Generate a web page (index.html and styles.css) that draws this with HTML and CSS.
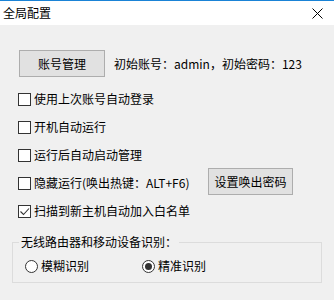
FILE: index.html
```html
<!DOCTYPE html>
<html lang="zh-CN">
<head>
  <meta charset="UTF-8" />
  <title>全局配置</title>
  <link rel="stylesheet" href="styles.css">
</head>
<body>

<div class="window">
  <!-- Title bar -->
  <div class="titlebar">
    <span class="title">全局配置</span>
    <svg class="close" width="11" height="11" viewBox="0 0 11 11">
      <path d="M0.5 0.5 L10.5 10.5 M10.5 0.5 L0.5 10.5" stroke="#000" stroke-width="1" fill="none"/>
    </svg>
  </div>

  <div class="content">
    <!-- Account -->
    <div class="account-row">
      <button class="btn btn-account">账号管理</button>
      <span class="hint">初始账号：admin，初始密码：123</span>
    </div>

    <!-- Options -->
    <ul class="options">
      <li class="option"><span class="check"></span><span>使用上次账号自动登录</span></li>
      <li class="option"><span class="check"></span><span>开机自动运行</span></li>
      <li class="option"><span class="check"></span><span>运行后自动启动管理</span></li>
      <li class="option">
        <span class="check"></span><span class="option-label">隐藏运行(唤出热键：ALT+F6)</span>
        <button class="btn btn-hotkey">设置唤出密码</button>
      </li>
      <li class="option">
        <span class="check">
          <svg width="11" height="11" viewBox="0 0 11 11">
            <path d="M1.5 5.5 L4.5 8.5 L10 2.5" stroke="#333" stroke-width="1.1" fill="none"/>
          </svg>
        </span><span>扫描到新主机自动加入白名单</span>
      </li>
    </ul>

    <!-- Recognition group -->
    <fieldset class="group">
      <legend>无线路由器和移动设备识别：</legend>
      <div class="radios">
        <div class="radio-item"><span class="radio"></span><span>模糊识别</span></div>
        <div class="radio-item"><span class="radio checked"></span><span>精准识别</span></div>
      </div>
    </fieldset>
  </div>
</div>

</body>
</html>
```

FILE: styles.css
```css
* { box-sizing: border-box; }
body {
  margin: 0;
  background-color: #f0f0f0;
  font-family: "Noto Sans CJK SC", "Microsoft YaHei", sans-serif;
  font-size: 12px;
  color: #000;
  overflow: hidden;
}

.window {
  width: 334px;
  height: 300px;
  background-color: #f0f0f0;
}

.titlebar {
  height: 25px;
  border-top: 1px solid #1a83d6;
  background-color: #fff;
  display: flex;
  align-items: center;
  justify-content: space-between;
  padding: 0 11px 0 3px;
}

.title { line-height: 16px; }
.close { display: block; }

.content {
  padding: 25px 0 0 18px;
}

.account-row {
  display: flex;
  align-items: center;
  padding-left: 1px;
}

.btn {
  height: 27px;
  padding: 0;
  border: 1px solid #adadad;
  background-color: #e1e1e1;
  font-family: inherit;
  font-size: 12px;
  color: #000;
  line-height: 16px;
}

.btn-account { width: 86px; }
.hint { margin-left: 9px; line-height: 16px; }

.options {
  list-style: none;
  margin: 8px 0 0 0;
  padding: 0;
}

.option {
  height: 28px;
  display: flex;
  align-items: center;
  line-height: 16px;
}

.check {
  width: 13px;
  height: 13px;
  border: 1px solid #333;
  background-color: #fff;
  margin-right: 3px;
  display: flex;
  align-items: center;
  justify-content: center;
}

.option-label { width: 174px; }
.btn-hotkey { width: 85px; margin-bottom: 3px; }

.group {
  margin: 9px 0 0 -6px;
  width: 310px;
  border: 1px solid #dcdcdc;
  padding: 8px 6px 8px 6px;
}

.group legend {
  padding: 0 2px;
  line-height: 16px;
}

.radios {
  display: flex;
  align-items: center;
  height: 16px;
  padding-left: 6px;
}

.radio-item {
  width: 117px;
  display: flex;
  align-items: center;
  line-height: 16px;
}

.radio {
  width: 13px;
  height: 13px;
  border: 1px solid #333;
  border-radius: 50%;
  background-color: #fff;
  margin-right: 3px;
  display: flex;
  align-items: center;
  justify-content: center;
}

.radio.checked::after {
  content: "";
  width: 7px;
  height: 7px;
  border-radius: 50%;
  background-color: #333;
}
```
